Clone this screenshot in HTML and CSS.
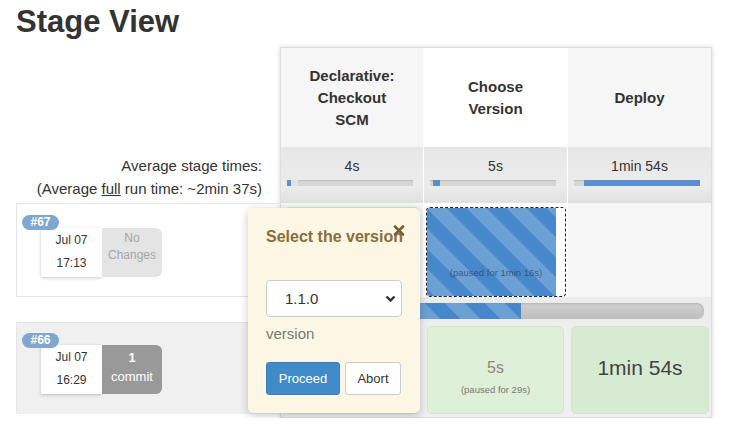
FILE: index.html
```html
<!DOCTYPE html>
<html>
<head>
<meta charset="utf-8">
<title>Stage View</title>
<link rel="stylesheet" href="styles.css">
</head>
<body>
<h1 class="title">Stage View</h1>
<div class="stage-view">
  <div class="job-col">
    <div class="job-head"></div>
    <div class="avg-label">
      <div>Average stage times:</div>
      <div>(Average <u>full</u> run time: ~2min 37s)</div>
    </div>
    <div class="build build-first">
      <span class="badge">#67</span>
      <div class="build-info">
        <div class="date"><div>Jul 07</div><div>17:13</div></div>
        <div class="changes"><div>No</div><div>Changes</div></div>
      </div>
    </div>
    <div class="build-gap"></div>
    <div class="build build-alt">
      <span class="badge">#66</span>
      <div class="build-info">
        <div class="date"><div>Jul 07</div><div>16:29</div></div>
        <div class="changes changes-commit"><div class="num">1</div><div>commit</div></div>
      </div>
    </div>
  </div>

  <div class="stages">
    <div class="row heads">
      <div class="head">Declarative:<br>Checkout<br>SCM</div>
      <div class="head head-sel">Choose<br>Version</div>
      <div class="head">Deploy</div>
    </div>
    <div class="row avgs">
      <div class="avg"><div class="avg-time">4s</div><div class="track"><div class="fill" style="margin-left:0px;width:4px"></div><div class="fill-light" style="width:7px"></div></div></div>
      <div class="avg"><div class="avg-time">5s</div><div class="track"><div class="fill" style="margin-left:3px;width:7px"></div></div></div>
      <div class="avg"><div class="avg-time">1min 54s</div><div class="track"><div class="fill" style="margin-left:10px;width:116px"></div></div></div>
    </div>
    <div class="row run run-first">
      <div class="cell"><div class="ok">4s</div></div>
      <div class="cell cell-sel">
        <div class="paused-box">
          <div class="paused-fill striped" style="width:129px"></div>
          <div class="paused-text">(paused for 1min 16s)</div>
        </div>
      </div>
      <div class="cell"></div>
    </div>
    <div class="row progress">
      <div class="bar"><div class="bar-fill striped" style="width:236px"></div></div>
    </div>
    <div class="row run run-alt">
      <div class="cell"><div class="ok">4s</div></div>
      <div class="cell"><div class="ok ok-paused"><div class="ok-time">5s</div><div class="ok-note">(paused for 29s)</div></div></div>
      <div class="cell"><div class="ok ok-long">1min 54s</div></div>
    </div>
  </div>

  <div class="popup">
    <div class="popup-title">Select the version</div>
    <span class="popup-close"><svg width="12" height="11" viewBox="0 0 12 11"><path d="M2 1.5 L10 9.5 M10 1.5 L2 9.5" stroke="#7b5d2f" stroke-width="2.6" stroke-linecap="round"/></svg></span>
    <div class="select">
      <span>1.1.0</span>
      <svg width="11" height="8" viewBox="0 0 11 8"><path d="M1.5 1.5 L5.5 5.5 L9.5 1.5" fill="none" stroke="#333" stroke-width="2.4"/></svg>
    </div>
    <div class="param-name">version</div>
    <div class="actions">
      <button class="btn btn-primary">Proceed</button>
      <button class="btn btn-default">Abort</button>
    </div>
  </div>
</div>
</body>
</html>
```
FILE: styles.css
```css
* { box-sizing: border-box; }
body {
  margin: 0;
  padding: 0 16px;
  font-family: "Liberation Sans", Arial, sans-serif;
  color: #333;
  background: #fff;
}
.title {
  margin: 4px 0 0;
  font-size: 31px;
  line-height: 36px;
  font-weight: bold;
}
.stage-view {
  position: relative;
  display: flex;
  margin-top: 7px;
}
.job-col { width: 264px; }
.job-head { height: 100px; }
.avg-label {
  height: 56px;
  padding: 7px 18px 0 0;
  text-align: right;
  font-size: 15px;
  line-height: 23px;
}
.build {
  position: relative;
  border-left: 1px solid #e6e6e6;
  border-top: 1px solid #e6e6e6;
}
.build-first {
  height: 94px;
  border-bottom: 1px solid #e6e6e6;
  padding: 24px 0 0 24px;
}
.build-gap { height: 25px; }
.build-alt {
  height: 92px;
  background: #f0f0f0;
  padding: 22px 0 0 24px;
}
.badge {
  position: absolute;
  left: 5px;
  top: 11px;
  width: 37px;
  height: 15px;
  border-radius: 8px;
  background: #80a7d0;
  color: #fff;
  font-size: 12px;
  font-weight: bold;
  line-height: 15px;
  text-align: center;
  z-index: 1;
}
.build-alt .badge { top: 10px; }
.build-info { display: flex; }
.date {
  width: 61px;
  height: 49px;
  background: #fff;
  box-shadow: 0 1px 3px rgba(0,0,0,0.22);
  text-align: center;
  font-size: 12px;
  line-height: 23px;
  padding-top: 1px;
}
.changes {
  width: 60px;
  height: 49px;
  background: #e4e4e4;
  border-radius: 0 6px 6px 0;
  color: #a6a6a6;
  text-align: center;
  font-size: 12px;
  line-height: 17px;
  padding-top: 2px;
}
.changes-commit {
  background: #999;
  color: #fff;
  line-height: 19px;
  padding-top: 3px;
  font-size: 13px;
}
.changes-commit .num { font-weight: bold; }

.stages {
  width: 432px;
  border: 1px solid #dedede;
  box-shadow: 0 0 5px rgba(0,0,0,0.16);
  background: #fff;
}
.row {
  display: grid;
  grid-template-columns: 142px 143px 143px;
  column-gap: 1px;
}
.heads { height: 99px; }
.head {
  background: #f6f6f6;
  display: flex;
  align-items: center;
  justify-content: center;
  text-align: center;
  font-size: 15px;
  font-weight: bold;
  line-height: 22px;
}
.head-sel { background: #fff; }
.avgs { height: 56px; }
.avg {
  background: linear-gradient(#e7e7e7, #ececec 70%, #e0e0e0);
  padding-top: 9px;
  text-align: center;
  font-size: 14px;
}
.avg-time { line-height: 20px; }
.track {
  display: flex;
  margin: 4px 0 0 6px;
  width: 126px;
  height: 6px;
  background: #d6d6d6;
  box-shadow: inset 0 1px 1px rgba(0,0,0,0.12);
}
.fill { height: 6px; background: #5a8fd0; }
.fill-light { height: 6px; background: #e2e2e2; }

.run-first { height: 94px; }
.run-first .cell { background: #f6f6f6; }
.run-first .cell-sel { background: #fff; }
.run-first .ok { margin: 4px 3px 2px; height: 86px; }
.paused-box {
  display: grid;
  margin: 4px 1px 0 2px;
  width: 140px;
  height: 90px;
  border: 1px dashed #222;
  border-radius: 4px;
  overflow: hidden;
}
.paused-fill, .paused-text { grid-area: 1 / 1; }
.paused-fill { height: 88px; }
.paused-text {
  align-self: end;
  padding-bottom: 18px;
  text-align: center;
  font-size: 9.5px;
  color: rgba(30,50,80,0.65);
}
.striped {
  background-color: #4688c9;
  background-image: linear-gradient(45deg, rgba(255,255,255,0.2) 25%, transparent 25%, transparent 50%, rgba(255,255,255,0.2) 50%, rgba(255,255,255,0.2) 75%, transparent 75%, transparent);
  background-size: 40px 40px;
}
.progress {
  display: block;
  height: 25px;
  background: #ececec;
  padding: 6px 7px 0 4px;
}
.bar {
  display: flex;
  height: 16px;
  border-radius: 7px;
  background: linear-gradient(#d2d2d2, #bdbdbd);
  box-shadow: inset 0 1px 2px rgba(0,0,0,0.15);
  overflow: hidden;
}
.bar-fill { height: 16px; }

.run-alt { height: 95px; background: #efefef; }
.run-alt .cell { background: #efefef; }
.ok {
  margin: 4px 3px 0;
  height: 88px;
  background: #dff0d8;
  border: 1px solid #d3e6cb;
  border-radius: 5px;
  display: flex;
  flex-direction: column;
  align-items: center;
  justify-content: center;
  color: #555;
  font-size: 16px;
}
.ok-paused { justify-content: flex-start; padding-top: 31px; }
.ok-time { font-size: 16px; line-height: 20px; color: #888; }
.ok-note { margin-top: 6px; font-size: 9.5px; line-height: 12px; color: #777; }
.ok-long {
  margin: 4px 2px 0 3px;
  background: #d7ebd2;
  font-size: 21px;
  color: #444;
  padding-bottom: 4px;
}

.popup {
  position: absolute;
  left: 232px;
  top: 161px;
  width: 172px;
  height: 205px;
  background: #fcf7e4;
  border-radius: 5px;
  box-shadow: 0 2px 9px rgba(0,0,0,0.22);
  padding: 19px 18px 0;
  z-index: 5;
}
.popup-title {
  font-size: 16px;
  line-height: 20px;
  font-weight: bold;
  color: #8a6d3b;
  white-space: nowrap;
}
.popup-close {
  position: absolute;
  top: 17px;
  right: 15px;
  line-height: 0;
}
.select {
  margin-top: 33px;
  width: 136px;
  height: 37px;
  background: #fff;
  border: 1px solid #ccc;
  border-radius: 4px;
  display: flex;
  align-items: center;
  justify-content: space-between;
  padding: 0 5px 0 18px;
  font-size: 15px;
  color: #333;
}
.param-name {
  margin-top: 7px;
  font-size: 15px;
  line-height: 20px;
  color: #777;
}
.actions {
  display: flex;
  gap: 5px;
  margin-top: 18px;
}
.btn {
  height: 33px;
  border-radius: 3px;
  font-family: "Liberation Sans", Arial, sans-serif;
  font-size: 13px;
  padding: 0;
}
.btn-primary {
  width: 74px;
  background: #428bca;
  border: 1px solid #3a7fbd;
  color: #fff;
}
.btn-default {
  width: 56px;
  background: #fff;
  border: 1px solid #ccc;
  color: #333;
}
```
